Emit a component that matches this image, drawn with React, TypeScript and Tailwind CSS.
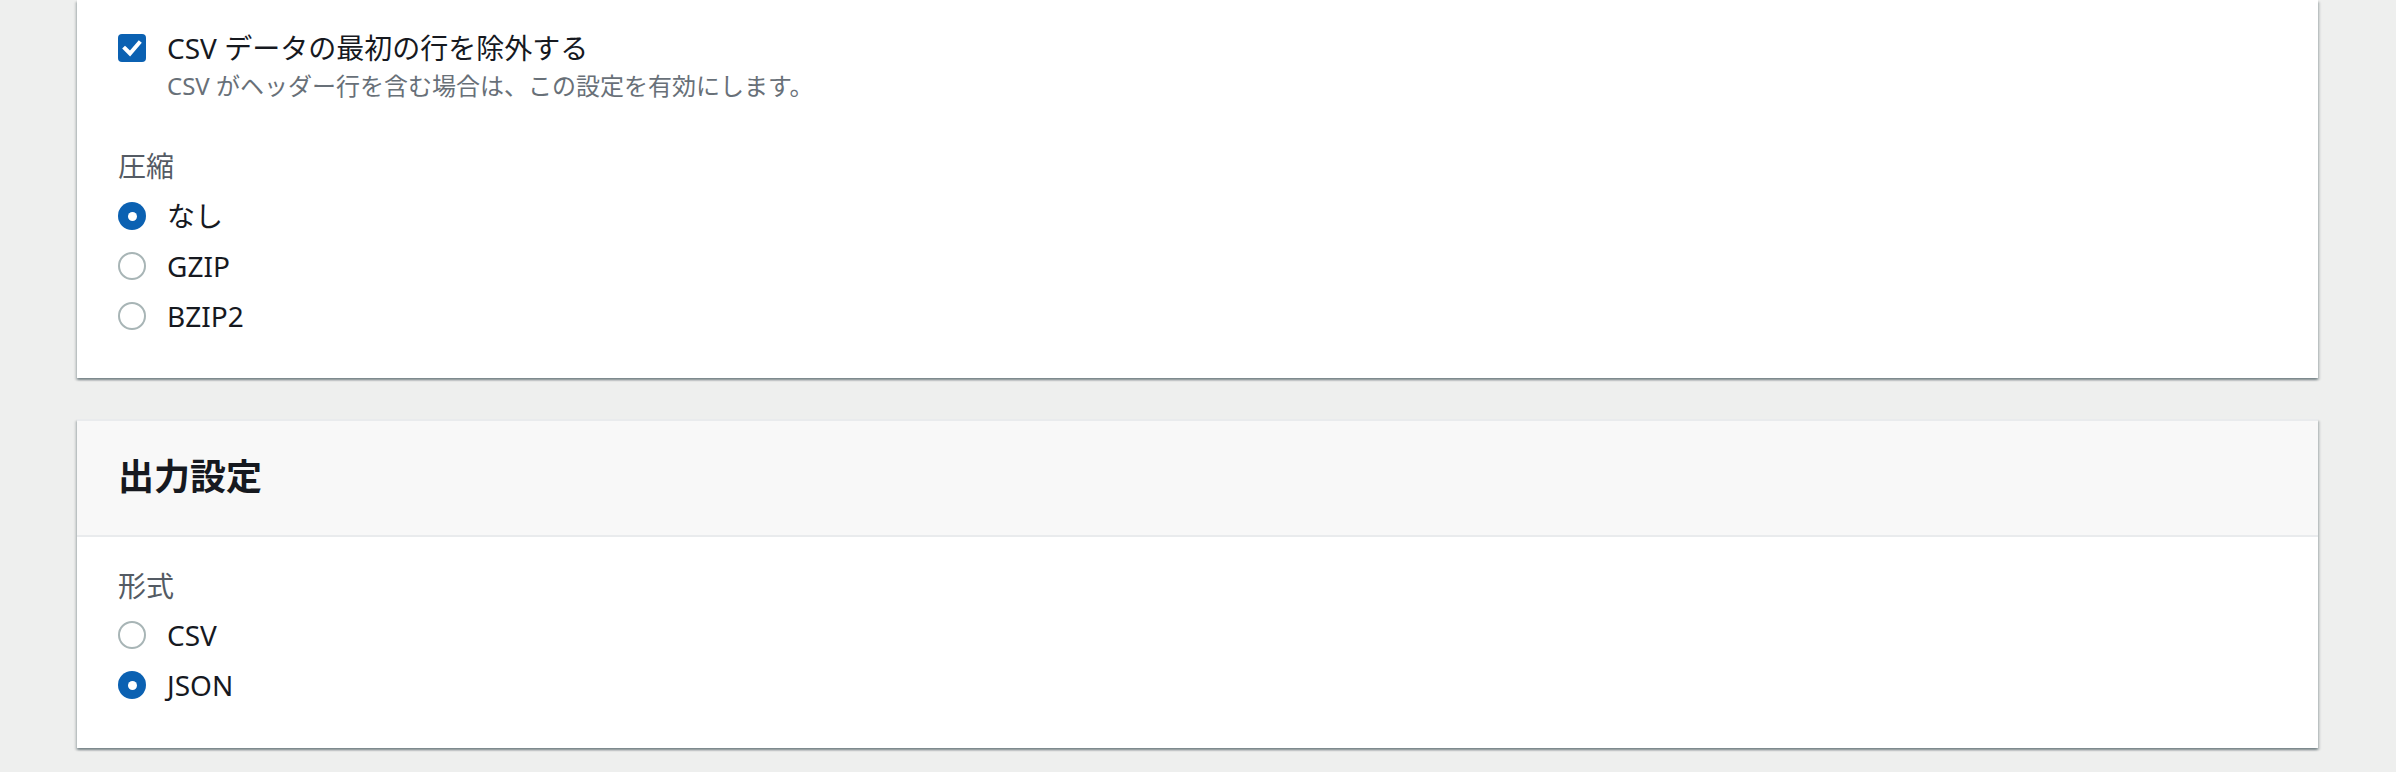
import React from 'react';

const font = { fontFamily: '"Noto Sans", "Noto Sans CJK JP", sans-serif' };

function Radio({ label, checked }: { label: string; checked?: boolean }) {
  return (
    <div className="flex items-center h-[50px]">
      {checked ? (
        <span className="w-[28px] h-[28px] rounded-full bg-[#0b61b2] flex items-center justify-center">
          <span className="w-[9px] h-[9px] rounded-full bg-white" />
        </span>
      ) : (
        <span className="w-[28px] h-[28px] rounded-full border-2 border-[#a8b5b6] bg-white" />
      )}
      <span className="ml-[21px] text-[28px] leading-[44px] text-[#16191f]">{label}</span>
    </div>
  );
}

function Card({ children, className = '' }: { children: React.ReactNode; className?: string }) {
  return (
    <div
      className={
        'bg-white shadow-[0_2px_2px_0_rgba(0,28,36,0.35),2px_2px_2px_0_rgba(0,28,36,0.12),-2px_2px_2px_0_rgba(0,28,36,0.12)] ' +
        className
      }
    >
      {children}
    </div>
  );
}

export default function App() {
  return (
    <div className="min-h-[772px] bg-[#eeefee] pl-[77px] pr-[78px] pb-[24px]" style={font}>
      <Card className="pl-[41px] pt-[26px] pb-[37px]">
        <div className="flex items-start">
          <span className="mt-[8px] w-[28px] h-[28px] rounded-[4px] bg-[#0b61b2] flex items-center justify-center">
            <svg width="28" height="28" viewBox="0 0 28 28">
              <path d="M7 14.5 L12 19.5 L21 9" fill="none" stroke="white" strokeWidth="4" strokeLinecap="square" />
            </svg>
          </span>
          <div className="ml-[21px]">
            <div className="text-[28px] leading-[44px] text-[#16191f]">CSV データの最初の行を除外する</div>
            <div className="text-[24px] leading-[32px] text-[#687078]">
              CSV がヘッダー行を含む場合は、この設定を有効にします。
            </div>
          </div>
        </div>

        <div className="mt-[42px] text-[28px] leading-[44px] text-[#545b64]">圧縮</div>
        <div className="mt-[3px] flex flex-col">
          <Radio label="なし" checked />
          <Radio label="GZIP" />
          <Radio label="BZIP2" />
        </div>
      </Card>

      <Card className="mt-[41px]">
        <div className="h-[118px] bg-[#f8f8f8] border-t-2 border-b-2 border-[#e9ebed] flex items-center pl-[41px] pb-[3px]">
          <h2 className="text-[36px] font-bold text-[#16191f] leading-[44px]">出力設定</h2>
        </div>
        <div className="pl-[41px] pt-[27px] pb-[38px]">
          <div className="text-[28px] leading-[44px] text-[#545b64]">形式</div>
          <div className="mt-[2px] flex flex-col">
            <Radio label="CSV" />
            <Radio label="JSON" checked />
          </div>
        </div>
      </Card>
    </div>
  );
}
